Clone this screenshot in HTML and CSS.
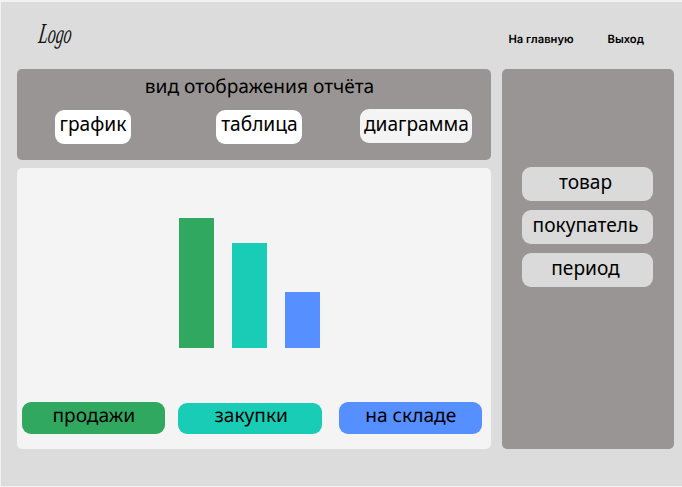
FILE: index.html
```html
<!DOCTYPE html>
<html lang="ru">
<head>
<meta charset="utf-8">
<title>Отчёты</title>
<link rel="stylesheet" href="styles.css">
</head>
<body>
<div class="page">
  <header class="header">
    <div class="logo"><span class="initial">L</span>ogo</div>
    <nav class="nav"><a>На главную</a><a>Выход</a></nav>
  </header>
  <main class="layout">
    <div class="content">
      <section class="panel views">
        <h1 class="title"><span>вид отображения отчёта</span></h1>
        <div class="view-buttons">
          <button class="btn graph"><span>график</span></button>
          <button class="btn table"><span>таблица</span></button>
          <button class="btn diagram"><span>диаграмма</span></button>
        </div>
      </section>
      <section class="panel report">
        <div class="chart">
          <div class="bar green" style="height:130.5px"></div>
          <div class="bar teal" style="height:105.5px"></div>
          <div class="bar blue" style="height:56.5px"></div>
        </div>
        <div class="legend">
          <div class="key green"><span>продажи</span></div>
          <div class="key teal"><span>закупки</span></div>
          <div class="key blue"><span>на складе</span></div>
        </div>
      </section>
    </div>
    <aside class="panel filters">
      <button class="btn filter"><span>товар</span></button>
      <button class="btn filter"><span>покупатель</span></button>
      <button class="btn filter"><span>период</span></button>
    </aside>
  </main>
</div>
</body>
</html>
```

FILE: styles.css
```css
* { box-sizing: border-box; }
body {
  margin: 0;
  padding: 2px 0 1px 1px;
  height: 487px;
  overflow: hidden;
  background: #f1f1f1;
  color: #000;
  font: 19.15px/26px "Noto Sans", sans-serif;
  text-rendering: geometricPrecision;
}
.page { height: 484px; background: #dcdcdc; padding: 0 8px 0 16px; }
.header { height: 67px; display: flex; justify-content: space-between; padding: 0 30px 0 22px; }
.logo {
  margin-top: 17px;
  height: 30px;
  font: italic 400 27px/30px "Liberation Serif", serif;
  color: #111;
  transform: scaleX(.58) skewX(-14deg);
  transform-origin: left center;
  white-space: nowrap;
}
.initial { font-size: 29px; }
.nav { display: flex; gap: 34px; padding-top: 28.5px; font: 600 11.2px/16px Inter, sans-serif; }
.layout { display: flex; gap: 10.5px; }
.content { width: 474px; display: flex; flex-direction: column; gap: 8px; }
.panel { border-radius: 5px; background: #999594; }
.views { height: 91px; padding-top: 4px; }
.title { margin: 0; padding-left: 11px; font-size: inherit; font-weight: 400; text-align: center; }
.view-buttons { display: flex; padding: 10.5px 0 0 38px; }
.btn {
  height: 34px;
  padding: 0 0 4px;
  border: 0;
  border-radius: 9px;
  background: #fff;
  color: #000;
  font: inherit;
  white-space: nowrap;
}
.graph { width: 76px; padding-bottom: 5px; }
.table { width: 86px; margin-left: 85.4px; padding-bottom: 5px; }
.diagram { width: 112px; margin-left: 58px; margin-top: -.5px; background: #f4f4f4; }
.report { height: 280.5px; background: #f4f4f4; padding-top: 49.5px; }
.chart { height: 130.5px; display: flex; align-items: flex-end; gap: 18px; padding-left: 162px; }
.bar { width: 35px; }
.green { background: #30a860; }
.teal { background: #19ccb6; }
.blue { background: #568fff; }
.legend { display: flex; padding: 54px 0 0 4.5px; }
.key { width: 143.5px; height: 31.5px; border-radius: 9px; padding-left: 1px; text-align: center; }
.key.teal { margin: .5px 17px 0 13px; padding-left: 3px; line-height: 25px; }
.filters { width: 172.5px; height: 379.5px; padding: 98px 0 0 20.5px; display: flex; flex-direction: column; gap: 9px; }
.filter { width: 131px; padding-right: 4px; background: #dadada; }
```
